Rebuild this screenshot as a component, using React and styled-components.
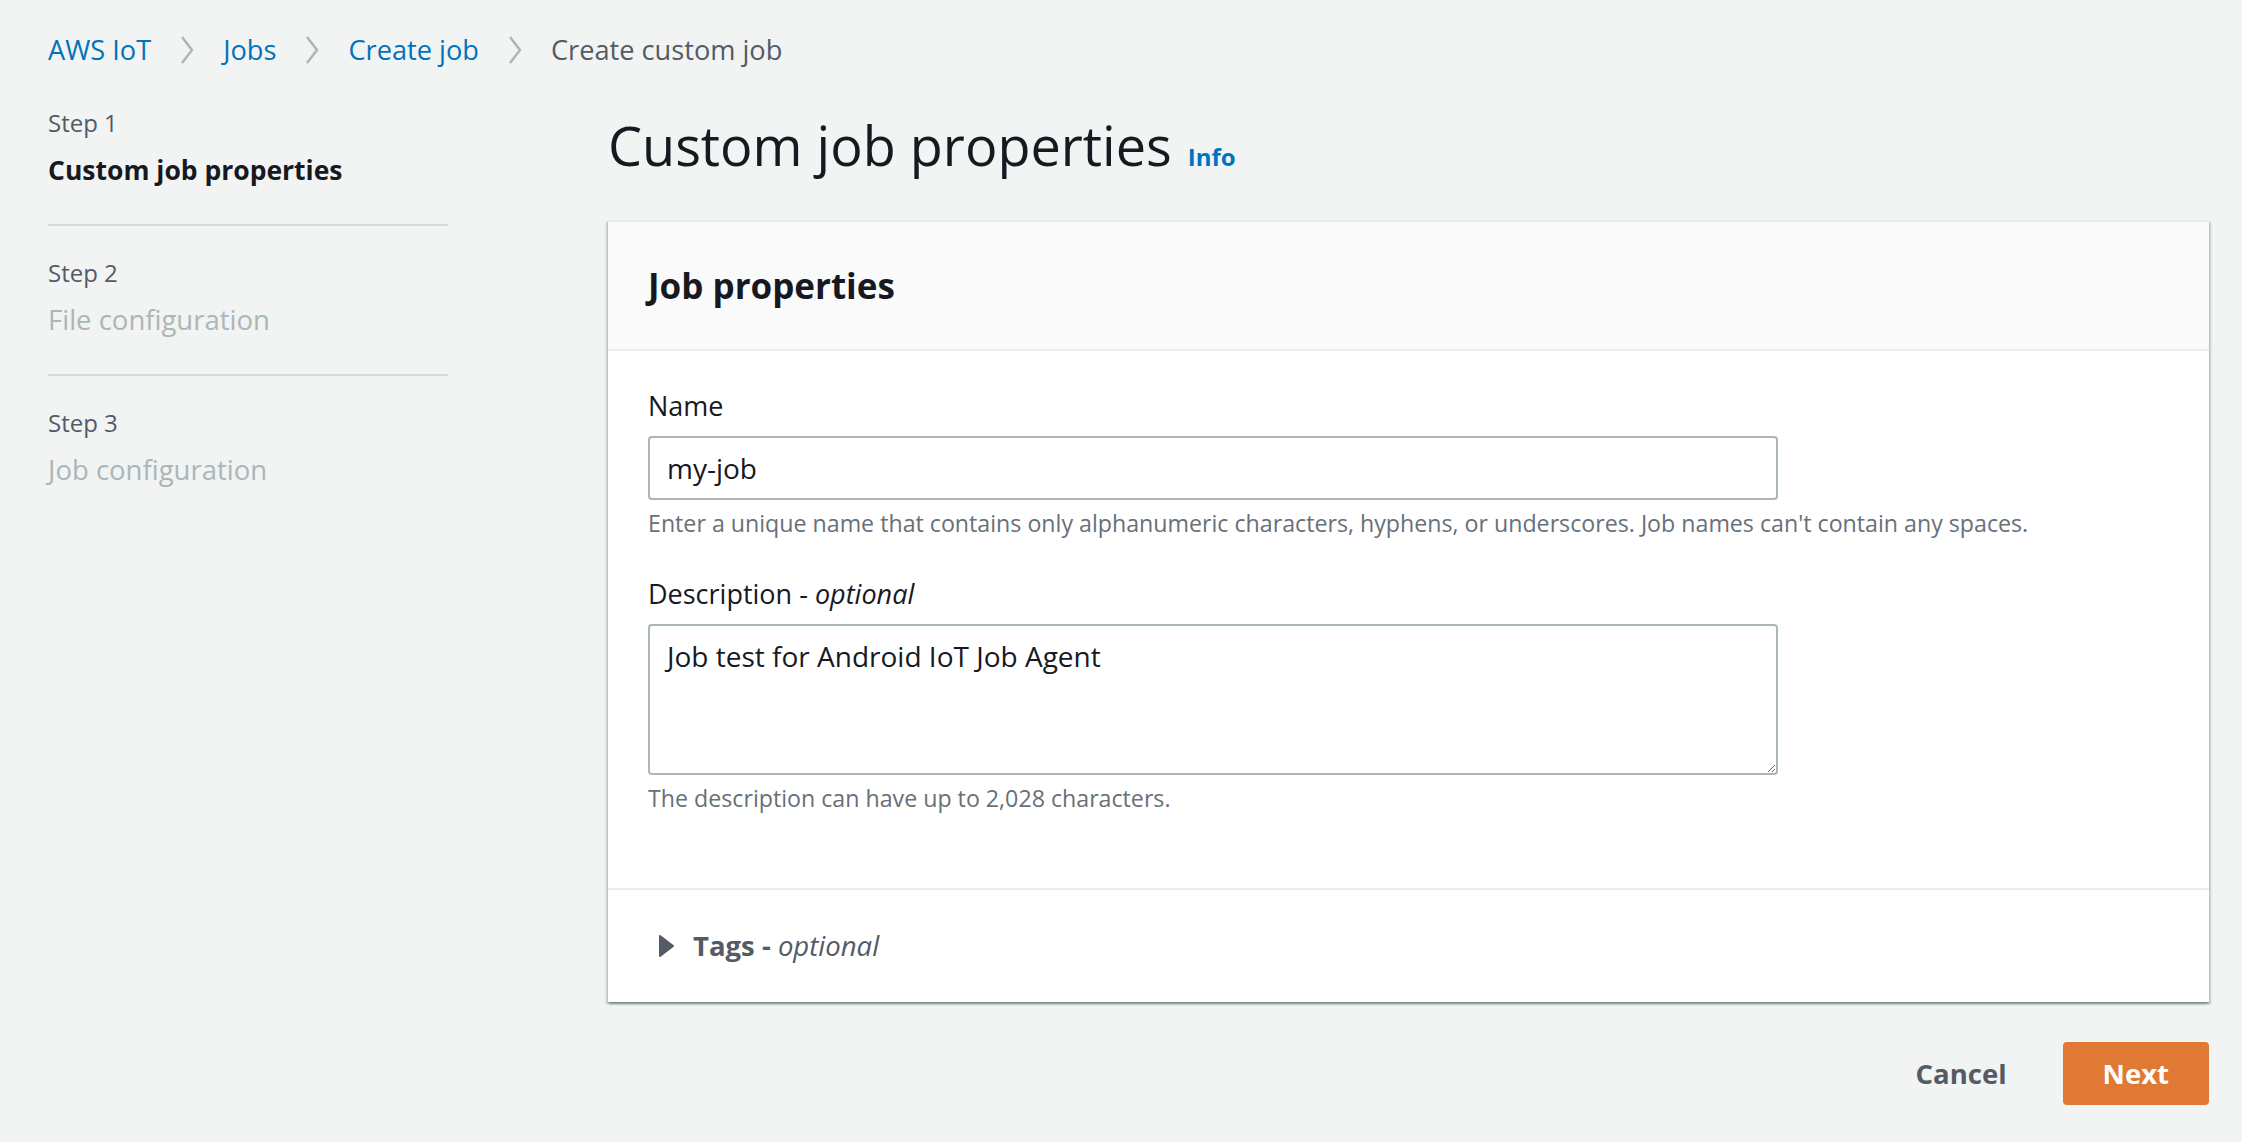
import styled, { createGlobalStyle } from 'styled-components';

const GlobalStyle = createGlobalStyle`
  body {
    margin: 0;
    background: #f2f3f3;
    font-family: "Open Sans", "Noto Sans", sans-serif;
    color: #16191f;
  }
`

const Page = styled.div`
  padding: 28px 33px 40px 48px;
`

const Breadcrumbs = styled.nav`
  display: flex;
  align-items: center;
  font-size: 27.2px;
  line-height: 44px;
`

const Crumb = styled.a`
  color: ${p => (p.$current ? '#545b64' : '#0073bb')};
  text-decoration: none;
`

const Chevron = styled.svg`
  width: 16px;
  height: 30px;
  margin: 0 28px;
`

const Layout = styled.div`
  display: grid;
  grid-template-columns: 400px 1fr;
  column-gap: 160px;
  margin-top: 35px;
`

const Steps = styled.ol`
  list-style: none;
  margin: 0;
  padding: 0;
`

const Step = styled.li`
  padding: 31px 0;
  border-bottom: 2px solid #d5dbdb;
  &:first-child { padding-top: 0; }
  &:last-child { border-bottom: none; }
`

const StepLabel = styled.div`
  font-size: 24px;
  line-height: 32px;
  color: #545b64;
`

const StepTitle = styled.div`
  margin-top: 8px;
  font-size: ${p => (p.$active ? '26.5px' : '27.5px')};
  line-height: 46px;
  font-weight: ${p => (p.$active ? 700 : 400)};
  color: ${p => (p.$active ? '#16191f' : '#aab7b8')};
`

const Main = styled.main`
  min-width: 0;
`

const TitleRow = styled.div`
  display: flex;
  align-items: baseline;
  gap: 16px;
`

const Heading = styled.h1`
  margin: 0;
  font-size: 54px;
  line-height: 76px;
  font-weight: 400;
`

const InfoLink = styled.a`
  font-size: 24px;
  font-weight: 700;
  color: #0073bb;
`

const Container = styled.section`
  margin-top: 37px;
  background: #fff;
  border-top: 2px solid #eaeded;
  box-shadow: 0 2px 2px 0 rgba(0, 28, 36, 0.3), 2px 2px 2px 0 rgba(0, 28, 36, 0.15),
    -2px 2px 2px 0 rgba(0, 28, 36, 0.15);
`

const ContainerHeader = styled.header`
  display: flex;
  align-items: center;
  height: 127px;
  padding: 0 40px;
  background: #fafafa;
  border-bottom: 2px solid #eaeded;
  h2 {
    margin: 0;
    font-size: 35px;
    line-height: 44px;
    font-weight: 700;
  }
`

const ContainerBody = styled.div`
  padding: 33px 40px 74px;
  display: flex;
  flex-direction: column;
  gap: 33px;
`

const Field = styled.div`
  display: flex;
  flex-direction: column;
`

const Label = styled.label`
  font-size: 27px;
  line-height: 44px;
  em { font-style: italic; }
`

const Input = styled.input`
  box-sizing: border-box;
  width: 1130px;
  height: 64px;
  margin-top: 8px;
  padding: 0 17px;
  border: 2px solid #aab7b8;
  border-radius: 4px;
  font-family: inherit;
  font-size: 28px;
  color: #16191f;
  outline: none;
`

const TextArea = styled.textarea`
  box-sizing: border-box;
  width: 1130px;
  height: 151px;
  margin-top: 8px;
  padding: 8px 17px;
  border: 2px solid #aab7b8;
  border-radius: 4px;
  font-family: inherit;
  font-size: 28px;
  line-height: 44px;
  color: #16191f;
  outline: none;
`

const Hint = styled.div`
  margin-top: 7px;
  font-size: 23.2px;
  line-height: 32px;
  color: #687078;
`

const Expander = styled.div`
  display: flex;
  align-items: center;
  gap: 18px;
  padding: 34px 40px 34px 50px;
  border-top: 2px solid #eaeded;
  font-size: 27.5px;
  line-height: 44px;
  color: #545b64;
  strong { font-weight: 700; }
  em { font-style: italic; font-weight: 400; }
`

const Actions = styled.div`
  display: flex;
  justify-content: flex-end;
  align-items: center;
  gap: 16px;
  margin-top: 40px;
`

const Button = styled.button`
  height: 63px;
  padding: 0 40px;
  border: none;
  border-radius: 4px;
  font-family: inherit;
  font-size: 27.5px;
  font-weight: 700;
  cursor: pointer;
  background: ${p => (p.$primary ? '#df7934' : 'transparent')};
  color: ${p => (p.$primary ? '#fff' : '#545b64')};
`

const Sep = () => (
  <Chevron viewBox="0 0 16 30">
    <polyline points="3,2 13,15 3,28" fill="none" stroke="#aab7b8" strokeWidth="2.5" />
  </Chevron>
)

const steps = [
  { label: 'Step 1', title: 'Custom job properties', active: true },
  { label: 'Step 2', title: 'File configuration' },
  { label: 'Step 3', title: 'Job configuration' },
]

const App = () => {
  return (
    <>
      <GlobalStyle />
      <Page>
        <Breadcrumbs>
          <Crumb href="#">AWS IoT</Crumb>
          <Sep />
          <Crumb href="#">Jobs</Crumb>
          <Sep />
          <Crumb href="#">Create job</Crumb>
          <Sep />
          <Crumb $current>Create custom job</Crumb>
        </Breadcrumbs>
        <Layout>
          <Steps>
            {steps.map(s => (
              <Step key={s.label}>
                <StepLabel>{s.label}</StepLabel>
                <StepTitle $active={s.active}>{s.title}</StepTitle>
              </Step>
            ))}
          </Steps>
          <Main>
            <TitleRow>
              <Heading>Custom job properties</Heading>
              <InfoLink>Info</InfoLink>
            </TitleRow>
            <Container>
              <ContainerHeader>
                <h2>Job properties</h2>
              </ContainerHeader>
              <ContainerBody>
                <Field>
                  <Label>Name</Label>
                  <Input defaultValue="my-job" />
                  <Hint>
                    Enter a unique name that contains only alphanumeric characters, hyphens, or underscores. Job names can't contain any spaces.
                  </Hint>
                </Field>
                <Field>
                  <Label>Description - <em>optional</em></Label>
                  <TextArea defaultValue="Job test for Android IoT Job Agent" />
                  <Hint>The description can have up to 2,028 characters.</Hint>
                </Field>
              </ContainerBody>
              <Expander>
                <svg width="17" height="22" viewBox="0 0 17 22">
                  <path d="M2 1 L15 11 L2 21 Z" fill="#545b64" strokeLinejoin="round" stroke="#545b64" strokeWidth="2" />
                </svg>
                <span><strong>Tags - </strong><em>optional</em></span>
              </Expander>
            </Container>
            <Actions>
              <Button>Cancel</Button>
              <Button $primary>Next</Button>
            </Actions>
          </Main>
        </Layout>
      </Page>
    </>
  )
}

export default App;
